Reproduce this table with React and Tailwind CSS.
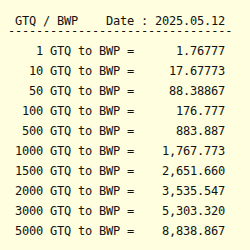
import React from "react";

const rows = [
  ["1", "1.76777"],
  ["10", "17.67773"],
  ["50", "88.38867"],
  ["100", "176.777"],
  ["500", "883.887"],
  ["1000", "1,767.773"],
  ["1500", "2,651.660"],
  ["2000", "3,535.547"],
  ["3000", "5,303.320"],
  ["5000", "8,838.867"],
];

export default function App() {
  return (
    <div className="w-[250px] h-[250px] bg-[#ffffe0] text-[#111] text-[12px] tracking-[-0.22px] pt-[11px] pl-[8px] font-['DejaVu_Sans_Mono',monospace] overflow-hidden">
      <div className="flex w-[217px] justify-between pl-[7px] leading-[20px] whitespace-pre">
        <span>GTQ / BWP</span>
        <span>Date : 2025.05.12</span>
      </div>
      <div className="h-[10px] leading-[0px] whitespace-pre">{"-".repeat(32)}</div>
      <div className="grid grid-cols-[126px_91px]">
        {rows.map(([a, b]) => (
          <React.Fragment key={a}>
            <div className="text-right leading-[20px] whitespace-pre">{a} GTQ to BWP =</div>
            <div className="text-right leading-[20px]">{b}</div>
          </React.Fragment>
        ))}
      </div>
    </div>
  );
}
